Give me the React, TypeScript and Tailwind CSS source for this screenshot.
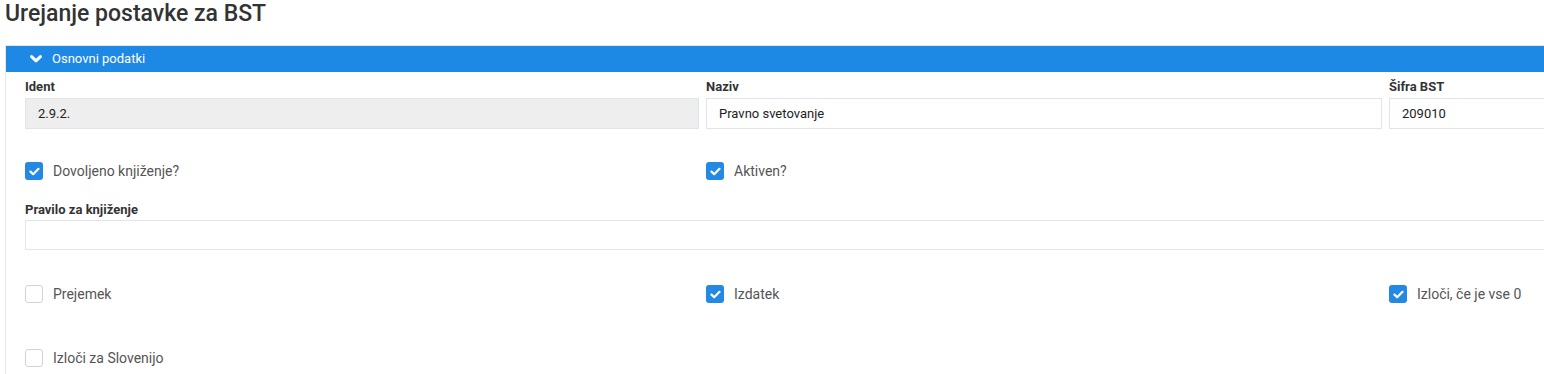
import React from 'react';

const Check = ({ checked }: { checked: boolean }) => {
  if (!checked) {
    return <span className="block w-[18px] h-[18px] shrink-0 rounded-[3px] border border-[#cfd4da] bg-white" />;
  }
  return (
    <span className="flex w-[18px] h-[18px] shrink-0 items-center justify-center rounded-[3px] bg-[#2389e3]">
      <svg width="11" height="9" viewBox="0 0 11 9" fill="none">
        <path d="M1.5 4.6 L4.2 7.2 L9.5 1.8" stroke="white" strokeWidth="2.2" strokeLinecap="round" strokeLinejoin="round" />
      </svg>
    </span>
  );
};

const CheckField = ({ label, checked }: { label: string; checked: boolean }) => (
  <div className="flex items-center h-[18px]">
    <Check checked={checked} />
    <span className="ml-[10px] text-[14px] leading-[18px] text-[#555]">{label}</span>
  </div>
);

const Label = ({ children }: { children: React.ReactNode }) => (
  <div className="text-[13px] leading-4 font-bold text-[#333]">{children}</div>
);

const TextInput = ({ value, readOnly }: { value: string; readOnly?: boolean }) => (
  <div
    className={`mt-[3px] h-[31px] flex items-center px-3 border border-[#dfe5ec] text-[13px] text-[#222] ${
      readOnly ? 'bg-[#eeeeee]' : 'bg-white'
    }`}
  >
    {value}
  </div>
);

const App = () => {
  return (
    <div className="w-full h-[374px] overflow-hidden bg-white" style={{ fontFamily: 'Roboto, "Liberation Sans", sans-serif' }}>
      <h1 className="pl-[5px] text-[23px] leading-[27px] font-medium text-[#333]">Urejanje postavke za BST</h1>

      <div className="mt-[18px] ml-[5px] w-[2080px] border-t border-l border-[#e6e6e6]">
        <div className="h-[26px] flex items-center bg-[#1e88e5] text-white">
          <svg className="ml-[24px]" width="12" height="8" viewBox="0 0 12 8" fill="none">
            <path d="M1.6 1.6 L6 5.8 L10.4 1.6" stroke="white" strokeWidth="3" strokeLinecap="round" strokeLinejoin="round" />
          </svg>
          <span className="ml-[10px] text-[13px]">Osnovni podatki</span>
        </div>

        <div className="pl-[19px] pt-[7px] pb-6">
          <div className="grid grid-cols-[674px_676px_674px] gap-x-[7px]">
            <div>
              <Label>Ident</Label>
              <TextInput value="2.9.2." readOnly />
            </div>
            <div>
              <Label>Naziv</Label>
              <TextInput value="Pravno svetovanje" />
            </div>
            <div>
              <Label>Šifra BST</Label>
              <TextInput value="209010" />
            </div>
          </div>

          <div className="mt-[33px] grid grid-cols-[674px_676px_674px] gap-x-[7px]">
            <CheckField label="Dovoljeno knjiženje?" checked />
            <CheckField label="Aktiven?" checked />
          </div>

          <div className="mt-[22px]">
            <Label>Pravilo za knjiženje</Label>
            <div className="mt-[2px] h-[30px] border border-[#dfe5ec] bg-white" />
          </div>

          <div className="mt-[35px] grid grid-cols-[674px_676px_674px] gap-x-[7px]">
            <CheckField label="Prejemek" checked={false} />
            <CheckField label="Izdatek" checked />
            <CheckField label="Izloči, če je vse 0" checked />
          </div>

          <div className="mt-[46px]">
            <CheckField label="Izloči za Slovenijo" checked={false} />
          </div>
        </div>
      </div>
    </div>
  );
};

export default App;
